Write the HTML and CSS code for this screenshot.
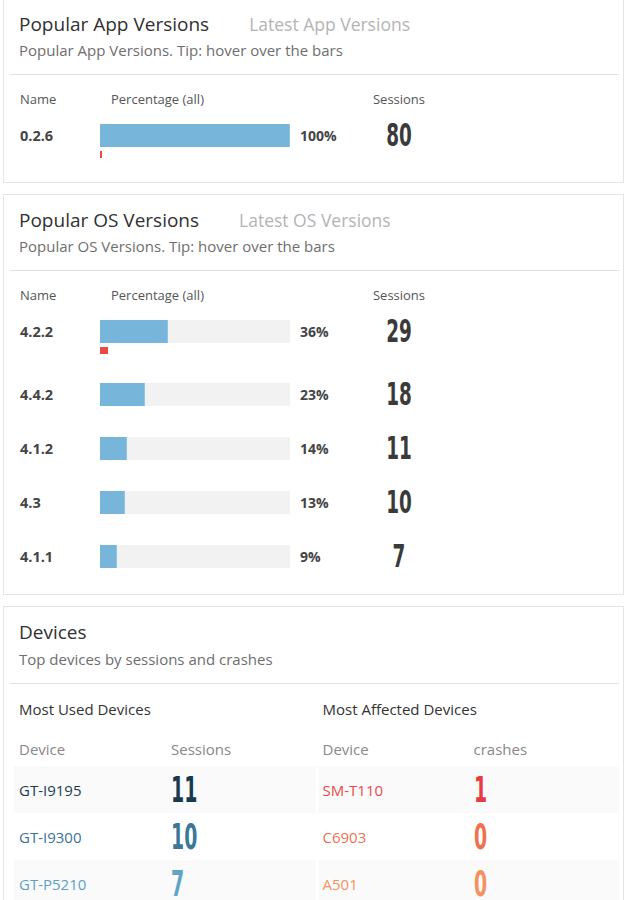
FILE: index.html
```html
<!DOCTYPE html>
<html lang="en">
<head>
<meta charset="utf-8">
<title>Versions and Devices</title>
<link rel="stylesheet" href="styles.css">
</head>
<body>
<div class="page">
  <section class="card">
    <header class="card-head">
      <div class="title-row"><h2 class="title">Popular App Versions</h2><span class="alt">Latest App Versions</span></div>
      <p class="subtitle">Popular App Versions. Tip: hover over the bars</p>
    </header>
    <div class="divider"></div>
    <div class="vtable">
      <div class="vrow vhead"><span>Name</span><span class="h-pct">Percentage (all)</span><span class="h-sess">Sessions</span></div>
      <div class="vrow">
        <span class="vname">0.2.6</span>
        <div class="barcell"><div class="bar"><div class="fill" style="width:100%"></div></div><div class="crash" style="width:2px"></div></div>
        <span class="pct">100%</span>
        <span class="sess"><span class="num">80</span></span>
      </div>
    </div>
  </section>

  <section class="card">
    <header class="card-head">
      <div class="title-row"><h2 class="title">Popular OS Versions</h2><span class="alt">Latest OS Versions</span></div>
      <p class="subtitle">Popular OS Versions. Tip: hover over the bars</p>
    </header>
    <div class="divider"></div>
    <div class="vtable">
      <div class="vrow vhead"><span>Name</span><span class="h-pct">Percentage (all)</span><span class="h-sess">Sessions</span></div>
      <div class="vrow">
        <span class="vname">4.2.2</span>
        <div class="barcell"><div class="bar"><div class="fill" style="width:36%"></div></div><div class="crash" style="width:8px"></div></div>
        <span class="pct">36%</span>
        <span class="sess"><span class="num">29</span></span>
      </div>
      <div class="vrow">
        <span class="vname">4.4.2</span>
        <div class="barcell"><div class="bar"><div class="fill" style="width:23.6%"></div></div></div>
        <span class="pct">23%</span>
        <span class="sess"><span class="num">18</span></span>
      </div>
      <div class="vrow">
        <span class="vname">4.1.2</span>
        <div class="barcell"><div class="bar"><div class="fill" style="width:14.4%"></div></div></div>
        <span class="pct">14%</span>
        <span class="sess"><span class="num">11</span></span>
      </div>
      <div class="vrow">
        <span class="vname">4.3</span>
        <div class="barcell"><div class="bar"><div class="fill" style="width:13.1%"></div></div></div>
        <span class="pct">13%</span>
        <span class="sess"><span class="num">10</span></span>
      </div>
      <div class="vrow">
        <span class="vname">4.1.1</span>
        <div class="barcell"><div class="bar"><div class="fill" style="width:9.2%"></div></div></div>
        <span class="pct">9%</span>
        <span class="sess"><span class="num">7</span></span>
      </div>
    </div>
  </section>

  <section class="card">
    <header class="card-head">
      <div class="title-row"><h2 class="title">Devices</h2></div>
      <p class="subtitle sub-dev">Top devices by sessions and crashes</p>
    </header>
    <div class="divider"></div>
    <div class="devices">
      <div class="dcol">
        <div class="dlabel">Most Used Devices</div>
        <div class="dhead"><span>Device</span><span>Sessions</span></div>
        <div class="dlist">
          <div class="drow c1"><span>GT-I9195</span><span class="dnum">11</span></div>
          <div class="drow c2"><span>GT-I9300</span><span class="dnum">10</span></div>
          <div class="drow c3"><span>GT-P5210</span><span class="dnum">7</span></div>
        </div>
      </div>
      <div class="dcol">
        <div class="dlabel">Most Affected Devices</div>
        <div class="dhead dhead-r"><span>Device</span><span>crashes</span></div>
        <div class="dlist">
          <div class="drow drow-r r1"><span>SM-T110</span><span class="dnum">1</span></div>
          <div class="drow drow-r r2"><span>C6903</span><span class="dnum">0</span></div>
          <div class="drow drow-r r3"><span>A501</span><span class="dnum">0</span></div>
        </div>
      </div>
    </div>
  </section>
</div>
</body>
</html>
```

FILE: styles.css
```css
* { box-sizing: border-box; }
html, body { margin: 0; padding: 0; background: #ffffff; }
body {
  font-family: "Open Sans", "Noto Sans", sans-serif;
  color: #333333;
  overflow: hidden;
}
.page {
  margin-top: -2px;
  padding: 0 3px;
}
.card {
  border: 1px solid #e4e4e4;
  background: #ffffff;
  margin-bottom: 11px;
}
.card-head {
  padding: 13px 16px 14px 15px;
}
.title-row {
  display: flex;
  align-items: baseline;
  gap: 40px;
  height: 24px;
}
.title {
  margin: 0;
  font-size: 19px;
  font-weight: 400;
  line-height: 24px;
  color: #303030;
}
.alt {
  font-size: 17.5px;
  line-height: 24px;
  color: #b4b4b4;
}
.subtitle {
  margin: 4px 0 0;
  font-size: 15px;
  line-height: 20px;
  color: #6e6e6e;
}
.sub-dev { margin-top: 5px; }
.divider {
  height: 1px;
  background: #e2e2e2;
  margin: 0 4px 0 6px;
}

/* version tables */
.vtable {
  padding: 15px 0 26px;
}
.vrow {
  display: grid;
  grid-template-columns: 80px 190px 68px 82px;
  align-items: start;
  padding-left: 16px;
}
.vrow + .vrow { margin-top: 31px; }
.vhead + .vrow { margin-top: 16px; }
.vhead {
  font-size: 13px;
  line-height: 18px;
  color: #555555;
}
.h-pct {
  grid-column: 2 / 4;
  padding-left: 11px;
}
.h-sess {
  grid-column: 4;
  text-align: center;
}
.vname {
  font-size: 14.5px;
  font-weight: 700;
  line-height: 23px;
  color: #444444;
}
.bar {
  height: 23px;
  background: #f2f2f2;
}
.fill {
  height: 100%;
  background: #77b5da;
  border-right: 1px solid #8fc4e2;
}
.crash {
  height: 7px;
  margin-top: 4px;
  margin-bottom: -2px;
  background: #ec4848;
}
.pct {
  padding-left: 10px;
  font-size: 14px;
  font-weight: 700;
  line-height: 23px;
  color: #444444;
}
.sess {
  display: flex;
  justify-content: center;
  align-items: center;
  height: 23px;
}
.num {
  display: block;
  font-family: "Liberation Sans Narrow", "DejaVu Sans Condensed", sans-serif;
  font-weight: 700;
  font-size: 32px;
  line-height: 23px;
  color: #3a3a3a;
  transform: scaleX(0.64);
}

/* devices */
.devices {
  display: grid;
  grid-template-columns: 1fr 1fr;
  column-gap: 2px;
  padding: 0 4px 0 10px;
}
.dlabel {
  padding: 15px 5px 0;
  font-size: 15px;
  line-height: 20px;
  color: #333333;
}
.dhead {
  display: grid;
  grid-template-columns: 152px 1fr;
  padding: 0 5px;
  margin-top: 20px;
  font-size: 15px;
  line-height: 20px;
  color: #888888;
}
.dhead-r { grid-template-columns: 151px 1fr; }
.dlist {
  margin-top: 7px;
}
.drow {
  display: grid;
  grid-template-columns: 152px 1fr;
  align-items: center;
  height: 47px;
  padding: 0 5px;
  font-size: 15px;
}
.drow-r { grid-template-columns: 151px 1fr; }
.drow:nth-child(odd) { background: #fafafa; }
.dnum {
  display: block;
  justify-self: start;
  font-family: "Liberation Sans Narrow", "DejaVu Sans Condensed", sans-serif;
  font-weight: 700;
  font-size: 35px;
  line-height: 30px;
  transform: scaleX(0.6);
  transform-origin: left center;
}
.c1 { color: #1d3c50; }
.c1 .dnum { color: #173a4f; }
.c2 { color: #3a7394; }
.c2 .dnum { color: #3b7898; }
.c3 { color: #5ca1c3; }
.c3 .dnum { color: #5ea4c6; }
.r1 { color: #ea4a4a; }
.r1 .dnum { color: #e73b40; }
.r2 { color: #f07052; }
.r2 .dnum { color: #f07050; }
.r3 { color: #f5925f; }
.r3 .dnum { color: #f5915e; }
```
